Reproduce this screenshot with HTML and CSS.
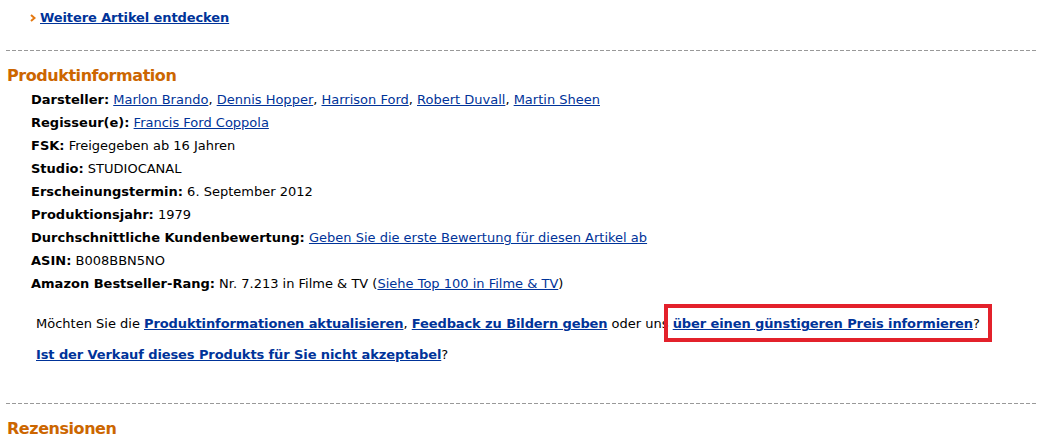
FILE: index.html
```html
<!DOCTYPE html>
<html lang="de">
<head>
<meta charset="utf-8">
<title>Produktinformation</title>
<link rel="stylesheet" href="styles.css">
</head>
<body>
<div class="page">
  <div class="more"><svg class="arrow" width="6" height="8" viewBox="0 0 6 8" aria-hidden="true"><polyline points="1,1 4.5,4 1,7" fill="none" stroke="#e47911" stroke-width="2"/></svg><a href="#" class="strong">Weitere Artikel entdecken</a></div>
  <div class="sep"></div>
  <h2 class="heading">Produktinformation</h2>
  <ul class="details">
    <li><b>Darsteller:</b> <a href="#">Marlon Brando</a>, <a href="#">Dennis Hopper</a>, <a href="#">Harrison Ford</a>, <a href="#">Robert Duvall</a>, <a href="#">Martin Sheen</a></li>
    <li><b>Regisseur(e):</b> <a href="#">Francis Ford Coppola</a></li>
    <li><b>FSK:</b> Freigegeben ab 16 Jahren</li>
    <li><b>Studio:</b> STUDIOCANAL</li>
    <li><b>Erscheinungstermin:</b> 6. September 2012</li>
    <li><b>Produktionsjahr:</b> 1979</li>
    <li><b>Durchschnittliche Kundenbewertung:</b> <a href="#">Geben Sie die erste Bewertung für diesen Artikel ab</a></li>
    <li><b>ASIN:</b> B008BBN5NO</li>
    <li><b>Amazon Bestseller-Rang:</b> Nr. 7.213 in Filme &amp; TV (<a href="#">Siehe Top 100 in Filme &amp; TV</a>)</li>
  </ul>
  <div class="feedback">
    <p>Möchten Sie die <a href="#" class="strong">Produktinformationen aktualisieren</a>, <a href="#" class="strong">Feedback zu Bildern geben</a> oder uns <span class="marked"><a href="#" class="strong">über einen günstigeren Preis informieren</a>?</span></p>
    <p><a href="#" class="strong">Ist der Verkauf dieses Produkts für Sie nicht akzeptabel</a>?</p>
  </div>
  <div class="sep sep-end"></div>
  <h2 class="heading">Rezensionen</h2>
</div>
</body>
</html>
```

FILE: styles.css
```css
html, body {
  margin: 0;
  padding: 0;
  background: #ffffff;
}
.page {
  font-family: "DejaVu Sans", Verdana, sans-serif;
  font-size: 13px;
  color: #000000;
  padding: 0 2px 0 6px;
}
a {
  color: #003399;
  text-decoration: underline;
}
a.strong {
  font-weight: bold;
  letter-spacing: -0.1px;
}
.more {
  display: flex;
  align-items: center;
  padding: 9px 0 0 24px;
  height: 18px;
  line-height: 18px;
}
.arrow {
  width: 6px;
  height: 8px;
  margin-right: 4px;
  flex: none;
}
.sep {
  height: 1px;
  margin-top: 23px;
  background-image: repeating-linear-gradient(to right, #999999 0, #999999 4px, transparent 4px, transparent 6px);
}
.heading {
  margin: 15px 0 0 1px;
  font-size: 16px;
  line-height: 20px;
  letter-spacing: -0.45px;
  color: #cc6600;
  font-weight: bold;
}
.details {
  list-style: none;
  margin: 2px 0 0 0;
  padding: 0 0 0 25px;
}
.details li {
  line-height: 23px;
  height: 23px;
}
.feedback {
  padding: 20px 0 0 30px;
}
.feedback p {
  margin: 0 0 13px 0;
  line-height: 18px;
}
.marked {
  position: relative;
}
.marked::after {
  content: "";
  position: absolute;
  left: -9px;
  right: -12px;
  top: -12px;
  bottom: -11px;
  border: 4px solid #e3212b;
}
.sep-end {
  margin-top: 39px;
}
```
